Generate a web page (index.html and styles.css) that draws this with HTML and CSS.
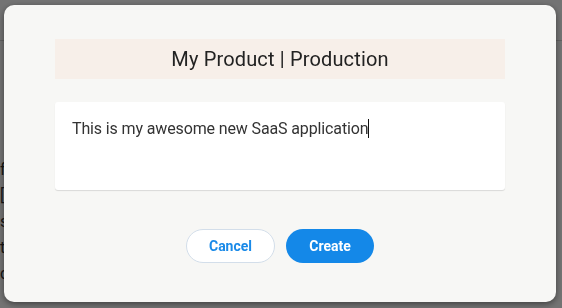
FILE: index.html
```html
<!DOCTYPE html>
<html lang="en">
<head>
  <meta charset="UTF-8">
  <meta name="viewport" content="width=device-width, initial-scale=1.0">
  <title>New Product</title>
  <link rel="stylesheet" href="styles.css">
</head>
<body>
  <!-- page behind the dialog -->
  <div class="page">
    <div class="topbar"></div>
    <div class="page-body">
      <p>features</p>
      <p>[ ]</p>
      <p>settings</p>
      <p>team</p>
      <p>config</p>
    </div>
  </div>

  <div class="overlay"></div>

  <!-- create product dialog -->
  <div class="modal">
    <div class="modal-title">My Product | Production</div>
    <div class="modal-input">This is my awesome new SaaS application<span class="caret"></span></div>
    <div class="modal-actions">
      <button class="btn btn-cancel">Cancel</button>
      <button class="btn btn-create">Create</button>
    </div>
  </div>
</body>
</html>
```

FILE: styles.css
```css
* { box-sizing: border-box; margin: 0; padding: 0; }

body {
  font-family: Roboto, 'Liberation Sans', sans-serif;
  background: #fff;
  color: #333;
  width: 562px;
  height: 308px;
  overflow: hidden;
}

.topbar {
  height: 41px;
  border-bottom: 1px solid #d6d6d6;
}

.page-body {
  padding-top: 116px;
  font-size: 16px;
}

.page-body p {
  line-height: 26px;
}

.overlay {
  position: fixed;
  inset: 0;
  background: rgba(0, 0, 0, 0.55);
}

.modal {
  position: fixed;
  left: 4px;
  top: 5px;
  width: 552px;
  height: 297px;
  background: #f7f7f5;
  border-radius: 10px;
  box-shadow: 0 2px 6px rgba(0, 0, 0, 0.45);
  padding: 34px 51px 0;
  display: flex;
  flex-direction: column;
}

.modal-title {
  height: 40px;
  background: #f7efe9;
  display: flex;
  align-items: center;
  justify-content: center;
  font-size: 20px;
  letter-spacing: 0.15px;
  color: #222;
}

.modal-input {
  margin-top: 23px;
  height: 88px;
  background: #fff;
  border-radius: 3px;
  box-shadow: 0 1px 1px rgba(0, 0, 0, 0.12);
  padding: 16px 17px;
  font-size: 16px;
  letter-spacing: -0.13px;
  line-height: 22px;
  color: #333;
}

.caret {
  display: inline-block;
  width: 1px;
  height: 19px;
  background: #111;
  vertical-align: -4px;
}

.modal-actions {
  margin-top: 39px;
  display: flex;
  justify-content: center;
  gap: 11px;
}

.btn {
  height: 34px;
  width: 89px;
  border-radius: 17px;
  font-family: Roboto, 'Liberation Sans', sans-serif;
  font-size: 14px;
  font-weight: 700;
  cursor: pointer;
}

.btn-cancel {
  background: #fff;
  border: 1px solid #d3deea;
  color: #1a8ae8;
}

.btn-create {
  background: #1488e8;
  border: none;
  color: #fff;
  width: 88px;
}
```
